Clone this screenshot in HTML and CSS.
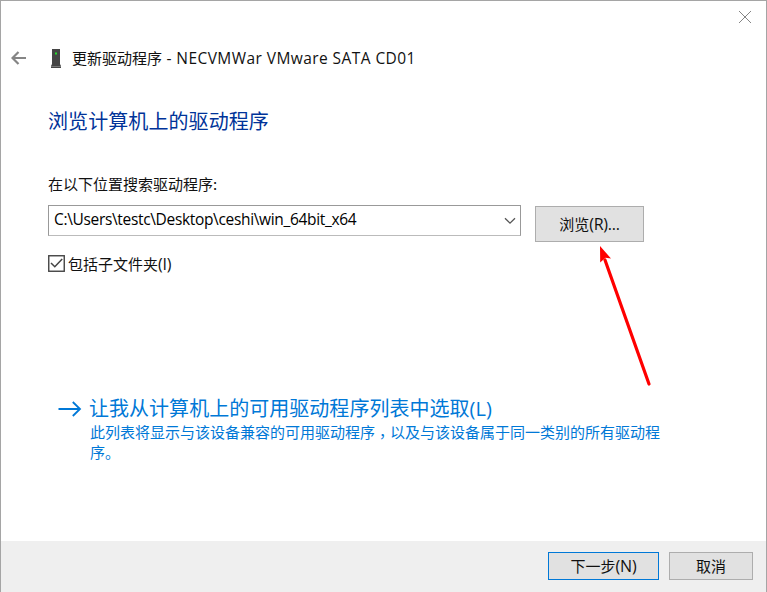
FILE: index.html
```
<!DOCTYPE html>
<html lang="zh-CN">
<head>
<meta charset="utf-8">
<title>更新驱动程序</title>
<link rel="stylesheet" href="styles.css">
</head>
<body>
<div class="window">
  <div class="titlebar">
    <svg class="close" width="14" height="14" viewBox="0 0 14 14"><path d="M1 1L13 13M13 1L1 13" fill="none" stroke="#858585" stroke-width="1"/></svg>
  </div>
  <header class="header">
    <svg class="back" width="16" height="14" viewBox="0 0 16 14"><path d="M15 7H1.500M7.500 1L1.500 7L7.500 13" fill="none" stroke="#858585" stroke-width="2.200"/></svg>
    <svg class="device" width="10" height="19" viewBox="0 0 10 19"><path d="M1 0H9V15L10 17V19H0V17L1 15Z" fill="#454545"/><path d="M0 17.500H10" stroke="#777" stroke-width="1"/><rect x="4" y="3.500" width="2" height="2" fill="#22e02b"/></svg>
    <div class="title">更新驱动程序<span class="latin title-name"> - NECVMWar VMware SATA CD01</span></div>
  </header>
  <main class="content">
    <h1 class="heading">浏览计算机上的驱动程序</h1>
    <div class="label">在以下位置搜索驱动程序:</div>
    <div class="row">
      <div class="combo">
        <span class="latin path">C:\Users\testc\Desktop\ceshi\win_64bit_x64</span>
        <svg width="12" height="8" viewBox="0 0 12 8"><path d="M1 1.200L6 6.200L11 1.200" fill="none" stroke="#555" stroke-width="1.300"/></svg>
      </div>
      <div class="button browse">浏览<span class="latin key">(R)...</span>
        <svg class="pointer" width="56" height="144" viewBox="0 0 56 144"><path d="M9 14L53 138" stroke="#f00" stroke-width="3.200" stroke-linecap="round"/><path d="M4 0L15 12.500L9.500 11.800L4.200 16.500Z" fill="#f00"/></svg>
      </div>
    </div>
    <div class="check">
      <svg width="17" height="17" viewBox="0 0 17 17"><rect x=".75" y=".75" width="15.500" height="15.500" fill="#fff" stroke="#444" stroke-width="1.400"/><path d="M3 8L6.800 11.800L14.200 4" fill="none" stroke="#444" stroke-width="1.500"/></svg>
      <span>包括子文件夹<span class="latin key">(I)</span></span>
    </div>
    <div class="command">
      <svg class="go" width="24" height="16" viewBox="0 0 24 16"><path d="M.5 8H22M14.800 1L22 8L14.800 15" fill="none" stroke="#0078d7" stroke-width="1.800"/></svg>
      <div>
        <div class="command-title">让我从计算机上的可用驱动程序列表中选取<span class="latin">(L)</span></div>
        <div class="command-text">此列表将显示与该设备兼容的可用驱动程序<span class="comma" lang="zh-TW">，</span>以及与该设备属于同一类别的所有驱动程<br>序。</div>
      </div>
    </div>
  </main>
  <footer class="footer">
    <div class="button next">下一步<span class="latin key">(N)</span></div>
    <div class="button cancel">取消</div>
  </footer>
</div>
</body>
</html>
```
FILE: styles.css
```
* { box-sizing: border-box; }
body {
  margin: 0;
  overflow: hidden;
  font-family: "Noto Sans CJK SC", "Noto Sans", sans-serif;
  font-size: 15px;
  line-height: 20px;
  color: #111;
  white-space: nowrap;
}
svg { display: block; flex: none; }
.latin { font-family: "Open Sans", "Noto Sans", sans-serif; }
.key { font-size: 16px; letter-spacing: -0.2px; }
.window {
  width: 767px;
  height: 592px;
  display: flex;
  flex-direction: column;
  background: #fff;
  border: 1px solid #a5a5a5;
  border-bottom: 0;
}
.titlebar {
  height: 44px;
  display: flex;
  justify-content: flex-end;
  padding: 9px 14px 0 0;
}
.header {
  height: 26px;
  display: flex;
  align-items: center;
  padding-left: 10px;
}
.device { margin-left: 24px; }
.title { margin-left: 11px; }
.title-name { white-space: pre; font-size: 15.5px; letter-spacing: 0.43px; }
.content {
  flex: 1;
  padding-left: 47px;
}
.heading {
  margin: 35px 0 0;
  font-size: 20px;
  line-height: 30px;
  font-weight: 400;
  letter-spacing: 0.08px;
  color: #003399;
}
.label { margin-top: 38px; }
.row {
  display: flex;
  align-items: flex-start;
  margin-top: 11px;
}
.combo {
  width: 473px;
  height: 31px;
  display: flex;
  align-items: center;
  justify-content: space-between;
  padding: 0 4px 3px 5px;
  border: 1px solid #999;
  border-bottom-color: #bbb;
}
.combo svg { margin-top: 4px; }
.path { font-size: 15.5px; letter-spacing: -0.33px; color: #000; }
.button {
  display: flex;
  align-items: center;
  justify-content: center;
  padding-bottom: 1px;
  background: #e1e1e1;
  border: 1px solid #adadad;
}
.browse {
  position: relative;
  width: 109px;
  height: 36px;
  margin: 1px 0 0 14px;
}
.pointer {
  position: absolute;
  left: 60px;
  top: 39px;
}
.check {
  display: flex;
  align-items: center;
  gap: 3px;
  margin-top: 12px;
  height: 20px;
}
.check svg { margin-top: -1px; }
.command {
  display: flex;
  align-items: flex-start;
  gap: 7px;
  margin: 120px 0 0 10px;
  color: #0078d7;
}
.go { margin-top: 7px; }
.command-title { font-size: 20px; line-height: 27px; letter-spacing: 0.03px; }
.command-text { padding-left: 1px; line-height: 20px; }
.comma {
  font-family: "Noto Sans CJK TC", sans-serif;
  line-height: 0;
  vertical-align: -4px;
}
.footer {
  height: 51px;
  display: flex;
  justify-content: flex-end;
  gap: 10px;
  padding: 11px 13px 0 0;
  background: #efefef;
}
.footer .button { height: 28px; }
.next { width: 111px; border-color: #0078d7; }
.cancel { width: 84px; }
```
